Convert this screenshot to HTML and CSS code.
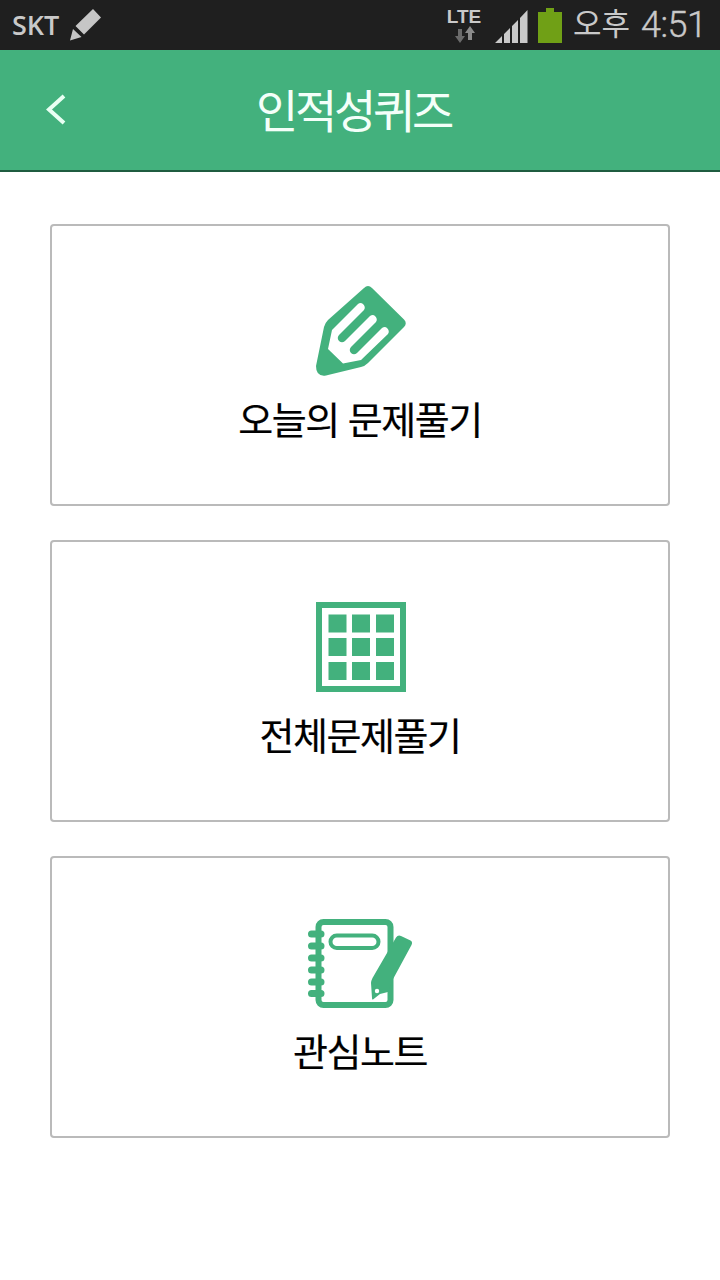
FILE: index.html
```html
<!DOCTYPE html>
<html lang="ko">
<head>
    <meta charset="UTF-8">
    <meta name="viewport" content="width=device-width, initial-scale=1.0">
    <title>인적성퀴즈</title>
    <link rel="stylesheet" href="styles.css">
</head>
<body>
    <div class="status-bar">
        <span class="carrier">SKT</span>
        <svg class="status-pencil" width="32" height="32" viewBox="0 0 32 32">
            <path fill="#c6c6c6" d="M23 0L31 8.500L14 25.500L5.500 17ZM3 20L11.500 28L0 31.500Z"/>
        </svg>
        <div class="network">
            <span class="lte">LTE</span>
            <svg width="22" height="17" viewBox="0 0 22 17">
                <path fill="#6b6b6b" d="M5 3H9V10H12L7 17L2 10H5Z"/>
                <path fill="#8a8a8a" d="M17 0L22 7H19V14H15V7H12Z"/>
            </svg>
        </div>
        <svg class="signal" width="33" height="33" viewBox="0 0 33 33">
            <path fill="#c9c9c9" d="M0 33L7 26V33ZM9 24L15 18V33H9ZM17 16L23 10V33H17ZM25 8L32.500 0V33H25Z"/>
        </svg>
        <svg class="battery" width="24" height="35" viewBox="0 0 24 35">
            <path fill="#70a016" d="M8 0H16V4H24V35H0V4H8Z"/>
        </svg>
        <span class="ampm">오후</span>
        <span class="clock">4:51</span>
    </div>

    <header>
        <a href="#" class="back">
            <svg width="20" height="32" viewBox="0 0 20 32">
                <path d="M18 2L3 15.500L18 29" fill="none" stroke="#e9fff3" stroke-width="4"/>
            </svg>
        </a>
        <h1>인적성퀴즈</h1>
    </header>

    <section class="menu">
        <a href="#" class="menu-item">
            <svg width="120" height="92" viewBox="0 0 120 92">
                <path fill="#43b17d" d="M64 3Q68-1 72 3L104 34.500Q107.500 38 104 42L68 78Q65 81 61 82L26 90.500Q16 92 16 81L24 42Q25 38 28 35Z"/>
                <path fill="#fff" d="M32 45L58 19Q60.500 17 63 19Q66 22 64 25L39 50Q36.500 53 39 56Q42 58.500 45 56L70 31Q73 29 75 31Q78 34 76 37L51 62Q48.500 65 51 68Q54 70.500 57 68L82 43Q85 41 87 43Q90 46 88 49L61 75L43 78.500L28 64Z"/>
            </svg>
            <span class="label">오늘의 문제풀기</span>
        </a>
        <a href="#" class="menu-item">
            <svg width="120" height="92" viewBox="0 0 120 92">
                <rect x="19" y="4" width="84" height="84" fill="none" stroke="#43b17d" stroke-width="6"/>
                <path fill="#43b17d" d="M28.500 13.500h18v18h-18zM52 13.500h18v18h-18zM76 13.500h18v18h-18zM28.500 37h18v18h-18zM52 37h18v18h-18zM76 37h18v18h-18zM28.500 61h18v18h-18zM52 61h18v18h-18zM76 61h18v18h-18z"/>
            </svg>
            <span class="label">전체문제풀기</span>
        </a>
        <a href="#" class="menu-item">
            <svg width="120" height="92" viewBox="0 0 120 92">
                <g fill="none" stroke="#43b17d">
                    <rect x="18.500" y="5" width="72" height="83" rx="5" stroke-width="6"/>
                    <rect x="30.500" y="18.500" width="48" height="12.500" rx="6.250" stroke-width="4"/>
                    <path stroke-width="7" stroke-linecap="round" d="M11.500 17H21M11.500 29H21M11.500 41H21M11.500 53H21M11.500 65H21M11.500 76.500H21"/>
                </g>
                <path fill="#fff" d="M87.500 66V75L72 85L78 72Z"/>
                <path fill="#43b17d" d="M96 20.500Q98 17.500 101 19L110.500 23.500Q113 25 111.500 28L92 64Q91 66 88 75L80 77L73 82.500Q72 83 72 81L71 66Q71 64 72.500 61Z"/>
                <circle cx="77" cy="74" r="2.200" fill="#fff"/>
            </svg>
            <span class="label">관심노트</span>
        </a>
    </section>
</body>
</html>
```

FILE: styles.css
```css
body {
    font-family: "Noto Sans CJK KR", sans-serif;
    margin: 0;
    padding: 0;
    background-color: #fff;
    color: #000;
}

svg {
    display: block;
    flex-shrink: 0;
}

.status-bar {
    display: flex;
    align-items: center;
    box-sizing: border-box;
    height: 50px;
    padding: 0 12px 0 12px;
    background-color: #1f1f1f;
    color: #c9c9c9;
    white-space: nowrap;
}

.carrier {
    width: 48px;
    font-family: "Open Sans", sans-serif;
    font-size: 27px;
    font-weight: 600;
    line-height: 48px;
}

.status-pencil {
    margin-left: 10px;
}

.network {
    display: flex;
    flex-direction: column;
    align-items: center;
    width: 36px;
    margin-left: auto;
}

.lte {
    font-family: "Liberation Sans", sans-serif;
    font-size: 19px;
    font-weight: bold;
    line-height: 18px;
}

.signal {
    margin: 3px 0 0 13px;
}

.battery {
    margin-left: 10px;
}

.ampm {
    width: 58px;
    margin-left: 11px;
    padding-bottom: 6px;
    font-size: 31px;
    font-weight: 400;
    line-height: 44px;
}

.clock {
    width: 67px;
    margin-left: 10px;
    font-family: Roboto, sans-serif;
    font-size: 36px;
    font-weight: 300;
    line-height: 50px;
    letter-spacing: -0.500px;
    -webkit-text-stroke: 0.4px #c9c9c9;
}

header {
    display: grid;
    grid-template-columns: 76px 1fr 89px;
    align-items: center;
    height: 120px;
    border-bottom: 2px solid #1f5c40;
    background-color: #43b17d;
}

.back {
    padding-left: 46px;
}

h1 {
    margin: 0;
    padding-bottom: 4px;
    color: #f4fff9;
    font-size: 46px;
    font-weight: 400;
    line-height: 116px;
    letter-spacing: -3.3px;
    text-align: center;
}

.menu {
    display: flex;
    flex-direction: column;
    gap: 34px;
    padding: 52px 50px;
}

.menu-item {
    display: flex;
    flex-direction: column;
    align-items: center;
    box-sizing: border-box;
    height: 282px;
    padding-top: 59px;
    border: 2px solid #bababa;
    border-radius: 4px;
    color: #000;
    text-decoration: none;
}

.label {
    margin-top: 11px;
    font-size: 38px;
    font-weight: 400;
    line-height: 60px;
    letter-spacing: -1.500px;
    -webkit-text-stroke: 0.2px #000;
}
```
